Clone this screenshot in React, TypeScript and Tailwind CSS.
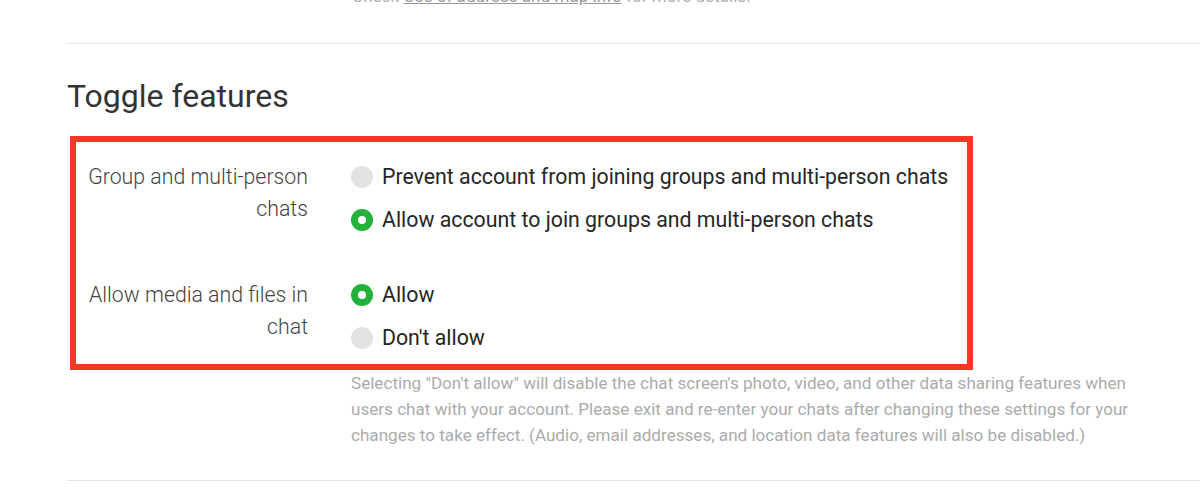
import React from "react";

function Radio({ checked }: { checked: boolean }) {
  return checked ? (
    <span className="flex h-[22px] w-[22px] shrink-0 items-center justify-center rounded-full bg-[#22b13a]">
      <span className="h-[8px] w-[8px] rounded-full bg-white" />
    </span>
  ) : (
    <span className="h-[22px] w-[22px] shrink-0 rounded-full bg-[#e1e3e5]" />
  );
}

function Option({ checked, label }: { checked: boolean; label: string }) {
  return (
    <div className="flex h-[43px] items-center gap-[9px]">
      <Radio checked={checked} />
      <span className="text-[21.3px] text-[#262626]">{label}</span>
    </div>
  );
}

function Row({ label, options }: { label: React.ReactNode; options: { checked: boolean; label: string }[] }) {
  return (
    <div className="flex">
      <div className="w-[232px] shrink-0 pt-[6px] text-right text-[21.3px] font-light leading-[32px] text-[#444]">
        {label}
      </div>
      <div className="ml-[43px] flex flex-col">
        {options.map((o) => (
          <Option key={o.label} checked={o.checked} label={o.label} />
        ))}
      </div>
    </div>
  );
}

export default function App() {
  return (
    <div className="h-[489px] w-[1200px] overflow-hidden bg-white font-['Roboto',sans-serif]">
      <div className="ml-[352px] -mt-[17px] text-[17.1px] leading-[26px] text-[#b0b0b0]">
        Check <span className="text-[#999] underline">Use of address and map info</span> for more details.
      </div>
      <div className="ml-[67px] mt-[34px] border-t border-[#e3e3e3]" />
      <h2 className="ml-[67px] mt-[32px] text-[32px] leading-[40px] text-[#333]">Toggle features</h2>
      <div className="ml-[70px] mt-[20px] w-[903px] border-[6px] border-[#f03a26] pt-[13px] pb-[5px]">
        <Row
          label={
            <>
              Group and multi-person
              <br />
              chats
            </>
          }
          options={[
            { checked: false, label: "Prevent account from joining groups and multi-person chats" },
            { checked: true, label: "Allow account to join groups and multi-person chats" },
          ]}
        />
        <div className="h-[32px]" />
        <Row
          label={
            <>
              Allow media and files in
              <br />
              chat
            </>
          }
          options={[
            { checked: true, label: "Allow" },
            { checked: false, label: "Don't allow" },
          ]}
        />
      </div>
      <p className="ml-[351px] mt-0 w-[790px] text-[17.1px] leading-[26px] text-[#ababab]">
        Selecting "Don't allow" will disable the chat screen's photo, video, and other data sharing features when users
        chat with your account. Please exit and re-enter your chats after changing these settings for your changes to
        take effect. (Audio, email addresses, and location data features will also be disabled.)
      </p>
      <div className="ml-[67px] mt-[32px] border-t border-[#e3e3e3]" />
    </div>
  );
}
